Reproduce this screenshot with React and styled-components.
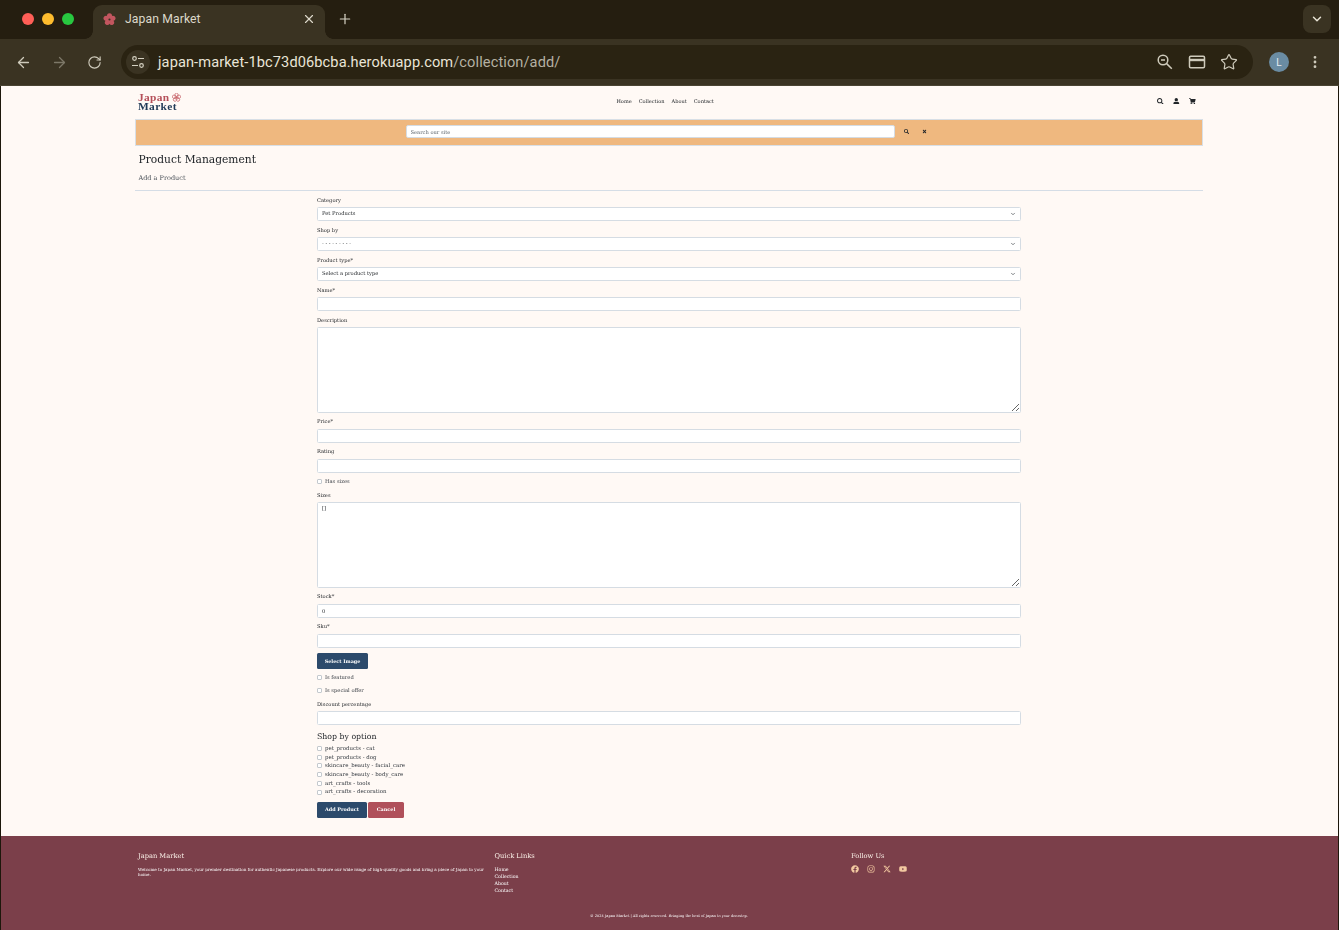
import React from "react";
import styled, { createGlobalStyle } from "styled-components";
import { ArrowLeft, ArrowRight, RotateCw, Plus, X, ChevronDown, Star, EllipsisVertical } from "lucide-react";
import { FaSearch, FaUser, FaShoppingCart, FaTimes, FaFacebook, FaInstagram, FaYoutube } from "react-icons/fa";
import { FaXTwitter } from "react-icons/fa6";

const serif = `"DejaVu Serif", "Liberation Serif", serif`;

const Global = createGlobalStyle`
  html, body { margin: 0; padding: 0; background: #1d170b; }
  * { box-sizing: border-box; }
  body { font-family: ${serif}; }
`;

const Window = styled.div`
  width: 1339px;
  height: 930px;
  overflow: hidden;
  display: flex;
  flex-direction: column;
`;
const TabStrip = styled.div`
  height: 39px;
  flex: none;
  background: #251e10;
  display: flex;
  align-items: flex-end;
  padding-left: 22px;
  padding-right: 8px;
`;
const Lights = styled.div`
  display: flex;
  gap: 8px;
  align-self: flex-start;
  margin-top: 13px;
  margin-right: 19px;
`;
const Light = styled.span`
  width: 12px;
  height: 12px;
  border-radius: 50%;
  background: ${p => p.$c};
`;
const Tab = styled.div`
  position: relative;
  width: 232px;
  height: 34px;
  background: #3a3322;
  border-radius: 9px 9px 0 0;
  display: flex;
  align-items: center;
  padding: 0 9px 6px 10px;
  color: #dcd8ca;
  font: 12.2px Roboto, sans-serif;
  letter-spacing: 0.1px;
  &::before, &::after {
    content: "";
    position: absolute;
    bottom: 0;
    width: 8px;
    height: 8px;
  }
  &::before { left: -8px; background: radial-gradient(circle at 0 0, #251e10 7.5px, #3a3322 8px); }
  &::after { right: -8px; background: radial-gradient(circle at 100% 0, #251e10 7.5px, #3a3322 8px); }
`;
const TabTitle = styled.span`
  margin-left: 9px;
  flex: 1;
`;
const NewTab = styled.div`
  color: #d8d4c6;
  display: flex;
  margin: 0 0 12px 12px;
`;
const TabMenu = styled.div`
  margin-left: auto;
  align-self: flex-start;
  margin-top: 5px;
  width: 28px;
  height: 28px;
  border-radius: 8px;
  background: #3a3322;
  color: #e8e4d6;
  display: flex;
  align-items: center;
  justify-content: center;
`;
const Toolbar = styled.div`
  height: 47px;
  flex: none;
  background: #3a3322;
  display: flex;
  align-items: center;
  padding: 0 14px;
  border-bottom: 1px solid #4a4433;
`;
const NavBtn = styled.div`
  width: 18px;
  margin-right: 18px;
  display: flex;
  justify-content: center;
  color: ${p => (p.$dim ? "#7d7868" : "#cfcbbc")};
  &:nth-child(2) { margin-right: 17px; }
  &:nth-child(3) { margin-right: 18px; }
`;
const Omnibox = styled.div`
  width: 1132px;
  height: 34px;
  border-radius: 17px;
  background: #2a2312;
  display: flex;
  align-items: center;
  padding: 0 15px 0 5px;
`;
const Tune = styled.div`
  width: 24px;
  height: 24px;
  border-radius: 50%;
  background: #3a3322;
  color: #d5d1c2;
  display: flex;
  align-items: center;
  justify-content: center;
  margin-right: 8px;
`;
const Url = styled.div`
  flex: 1;
  font: 14.6px Roboto, sans-serif;
  letter-spacing: 0.1px;
  color: #e9e5d7;
  & span { color: #b5b1a2; }
`;
const OmniIcons = styled.div`
  display: flex;
  gap: 14px;
  color: #cfcbbc;
`;
const Avatar = styled.div`
  width: 20px;
  height: 20px;
  margin-left: 16px;
  border-radius: 50%;
  background: #6a8ca3;
  color: #e8eef2;
  font: 10px Roboto, sans-serif;
  display: flex;
  align-items: center;
  justify-content: center;
`;
const Kebab = styled.div`
  margin-left: 18px;
  color: #cfcbbc;
  display: flex;
`;

const Page = styled.div`
  flex: 1;
  min-height: 0;
  margin: 0 1px;
  background: #fff9f5;
  display: flex;
  flex-direction: column;
  color: #212529;
`;
const Container = styled.div`
  width: 1068px;
  margin: 0 0 0 134px;
  flex: none;
  will-change: transform;
`;
const Header = styled.header`
  height: 33px;
  display: flex;
  align-items: center;
  justify-content: space-between;
  padding: 0 7px 1px 3px;
`;
const Logo = styled.div`
  width: 43px;
  font: 700 11.4px/9.5px "Liberation Serif", serif;
  letter-spacing: 0.35px;
  color: #1f3a57;
  & > div:first-child { color: #b5505a; display: flex; align-items: center; gap: 2px; }
`;
const Nav = styled.nav`
  display: flex;
  gap: 7px;
  margin-right: 8px;
  margin-bottom: 2px;
`;
const NavLink = styled.a`
  font-size: 5.05px;
  color: #212529;
`;
const HeaderIcons = styled.div`
  display: flex;
  gap: 9.5px;
  color: #212529;
  font-size: 6.6px;
  margin-bottom: 2px;
`;
const SearchBand = styled.div`
  height: 27px;
  background: #efb87f;
  border: 1px solid #d8dfe6;
  display: flex;
  align-items: center;
  justify-content: center;
  padding: 0 0 2px 1px;
`;
const SearchInput = styled.input`
  width: 489px;
  height: 13px;
  border: 1px solid #d5dce3;
  border-radius: 2px;
  background: #fff;
  padding: 0 4px;
  font: 5.15px ${serif};
  margin-right: 3px;
  &::placeholder { color: #5c646b; opacity: 1; }
`;
const SearchBtn = styled.div`
  width: 18px;
  display: flex;
  justify-content: center;
  color: #212529;
  font-size: 5px;
`;
const Heading = styled.div`
  padding: 8px 3.5px 0;
  border-bottom: 1px solid #d5dde6;
  height: 45px;
`;
const H1 = styled.h1`
  margin: 0;
  font: 400 10.7px/12px ${serif};
  color: #212529;
`;
const Sub = styled.div`
  margin-top: 8px;
  font-size: 6.5px;
  line-height: 8px;
  color: #495057;
`;
const Form = styled.form`
  width: 704px;
  margin: 5px auto 0;
`;
const Field = styled.div`
  margin-bottom: ${p => p.$mb ?? 5.5}px;
`;
const Label = styled.label`
  display: block;
  height: 8px;
  line-height: 8px;
  font-size: 5.15px;
  color: #212529;
  margin-bottom: ${p => p.$gap ?? 3}px;
`;
const SelectWrap = styled.div`
  position: relative;
  height: 13.5px;
  & > svg {
    position: absolute;
    right: 5px;
    top: 4px;
    color: #343a40;
  }
`;
const Select = styled.select`
  appearance: none;
  display: block;
  width: 100%;
  height: 100%;
  border: 1px solid #d5dce3;
  border-radius: 1.5px;
  background: #fff;
  padding: 0 4px 1px;
  font: 5.2px ${serif};
  letter-spacing: ${p => (p.$spaced ? "1.65px" : "0")};
  color: #212529;
`;
const Input = styled.input`
  display: block;
  width: 100%;
  height: 14px;
  border: 1px solid #d5dce3;
  border-radius: 1.5px;
  background: #fff;
  padding: 0 4px 1px;
  font: 5.2px ${serif};
  color: #212529;
`;
const TextArea = styled.textarea`
  display: block;
  width: 100%;
  height: 86px;
  border: 1px solid #d5dce3;
  border-radius: 1.5px;
  background: #fff;
  padding: 2px 4px;
  font: 5.2px ${serif};
  color: #212529;
`;
const Check = styled.div`
  display: flex;
  align-items: center;
  height: ${p => p.$h}px;
  margin-bottom: ${p => p.$mb ?? 0}px;
  font-size: ${p => p.$size ?? 5.2}px;
  color: #343a40;
  & input {
    appearance: none;
    width: 5px;
    height: 5px;
    margin: 1.5px 3px 0 0;
    border: 0.5px solid #c4c9ce;
    border-radius: 1px;
    background: #fff;
    flex: none;
  }
`;
const Btn = styled.button`
  display: block;
  height: 16px;
  border: none;
  border-radius: 1.5px;
  padding: 0 0 1px;
  width: ${p => p.$w}px;
  background: ${p => p.$bg};
  color: #fff;
  font: 700 4.9px ${serif};
`;
const OptionTitle = styled.h2`
  margin: 0 0 1.5px;
  font: 400 7.8px/11px ${serif};
  color: #212529;
`;
const Actions = styled.div`
  display: flex;
  gap: 1px;
  margin-top: 6px;
`;
const Footer = styled.footer`
  margin-top: auto;
  height: 94px;
  flex: none;
  background: #7b3f4a;
  color: #fff;
`;
const FooterInner = styled.div`
  width: 1068px;
  margin: 0 0 0 134px;
  padding: 15.5px 3px 0;
  will-change: transform;
`;
const FooterCols = styled.div`
  display: grid;
  grid-template-columns: repeat(3, 356.5px);
  height: 53.5px;
`;
const FooterCol = styled.div`
  padding-right: 10px;
`;
const FooterTitle = styled.h5`
  margin: 0 0 5.5px;
  font: 400 6.7px/9px ${serif};
  color: #fbf1e8;
`;
const FooterText = styled.p`
  margin: 0;
  padding-top: 1px;
  font-size: 4.12px;
  line-height: 5.2px;
  color: #fff;
`;
const FooterLink = styled.a`
  display: block;
  font-size: 4.7px;
  line-height: 7px;
  color: #fff;
`;
const Socials = styled.div`
  display: flex;
  gap: 8px;
  margin-top: -1px;
  color: #f3c9a1;
  font-size: 8px;
`;
const Copy = styled.div`
  margin-top: 8px;
  text-align: center;
  font-size: 3.56px;
  line-height: 6px;
  color: #fff;
`;

const Flower = ({ size, color }) => (
  <svg width={size} height={size} viewBox="0 0 24 24" fill={color}>
    {[0, 72, 144, 216, 288].map(a => (
      <ellipse key={a} cx="12" cy="6.5" rx="4.8" ry="6" transform={`rotate(${a} 12 12)`} />
    ))}
    <circle cx="12" cy="12" r="2" fill="#3a3322" />
  </svg>
);
const TuneIcon = () => (
  <svg width="14" height="14" viewBox="0 0 14 14" fill="none" stroke="currentColor" strokeWidth="1.2">
    <circle cx="3.5" cy="3.5" r="1.8" />
    <path d="M7 3.5h6M1 10.5h6" />
    <circle cx="10.5" cy="10.5" r="1.8" />
  </svg>
);
const ZoomIcon = () => (
  <svg width="18" height="18" viewBox="0 0 18 18" fill="none" stroke="currentColor" strokeWidth="1.5">
    <circle cx="7" cy="7" r="4.8" />
    <path d="M5 7h4M10.6 10.6l5.2 5.2" />
  </svg>
);
const CardIcon = () => (
  <svg width="18" height="18" viewBox="0 0 18 18" fill="none" stroke="currentColor" strokeWidth="1.5">
    <rect x="1.5" y="3.2" width="15" height="11.6" rx="1.2" />
    <path d="M1.5 7h15" strokeWidth="2.4" />
  </svg>
);
const LogoFlower = () => (
  <svg width="9" height="9" viewBox="0 0 24 24" fill="none" stroke="#c96a70" strokeWidth="2">
    {[0, 72, 144, 216, 288].map(a => (
      <ellipse key={a} cx="12" cy="6" rx="4.5" ry="5.5" transform={`rotate(${a} 12 12)`} />
    ))}
    <circle cx="12" cy="12" r="1.5" />
  </svg>
);

const SelectField = ({ label, value, spaced }) => (
  <Field>
    <Label>{label}</Label>
    <SelectWrap>
      <Select defaultValue={value} $spaced={spaced}><option>{value}</option></Select>
      <ChevronDown size={6} strokeWidth={2.5} />
    </SelectWrap>
  </Field>
);
const InputField = ({ label, value, gap, mb }) => (
  <Field $mb={mb}>
    <Label $gap={gap}>{label}</Label>
    <Input defaultValue={value} />
  </Field>
);
const AreaField = ({ label, value }) => (
  <Field $mb={4}>
    <Label>{label}</Label>
    <TextArea defaultValue={value} />
  </Field>
);

const options = [
  "pet_products - cat",
  "pet_products - dog",
  "skincare_beauty - facial_care",
  "skincare_beauty - body_care",
  "art_crafts - tools",
  "art_crafts - decoration",
];

export default function App() {
  return (
    <Window>
      <Global />
      <TabStrip>
        <Lights>
          <Light $c="#ff5f57" />
          <Light $c="#febc2e" />
          <Light $c="#28c840" />
        </Lights>
        <Tab>
          <Flower size={13} color="#c2565f" />
          <TabTitle>Japan Market</TabTitle>
          <X size={14} strokeWidth={2} />
        </Tab>
        <NewTab><Plus size={16} strokeWidth={1.8} /></NewTab>
        <TabMenu><ChevronDown size={14} strokeWidth={2.5} /></TabMenu>
      </TabStrip>
      <Toolbar>
        <NavBtn><ArrowLeft size={17} strokeWidth={1.8} /></NavBtn>
        <NavBtn $dim><ArrowRight size={17} strokeWidth={1.8} /></NavBtn>
        <NavBtn><RotateCw size={15} strokeWidth={1.8} /></NavBtn>
        <Omnibox>
          <Tune><TuneIcon /></Tune>
          <Url>japan-market-1bc73d06bcba.herokuapp.com<span>/collection/add/</span></Url>
          <OmniIcons>
            <ZoomIcon />
            <CardIcon />
            <Star size={18} strokeWidth={1.6} />
          </OmniIcons>
        </Omnibox>
        <Avatar>L</Avatar>
        <Kebab><EllipsisVertical size={16} strokeWidth={2.2} /></Kebab>
      </Toolbar>
      <Page>
        <Container>
          <Header>
            <Logo>
              <div>Japan<LogoFlower /></div>
              <div>Market</div>
            </Logo>
            <Nav>
              <NavLink>Home</NavLink>
              <NavLink>Collection</NavLink>
              <NavLink>About</NavLink>
              <NavLink>Contact</NavLink>
            </Nav>
            <HeaderIcons>
              <FaSearch />
              <FaUser />
              <FaShoppingCart />
            </HeaderIcons>
          </Header>
          <SearchBand>
            <SearchInput placeholder="Search our site" />
            <SearchBtn><FaSearch /></SearchBtn>
            <SearchBtn><FaTimes /></SearchBtn>
          </SearchBand>
          <Heading>
            <H1>Product Management</H1>
            <Sub>Add a Product</Sub>
          </Heading>
          <Form>
            <SelectField label="Category" value="Pet Products" />
            <SelectField label="Shop by" value="---------" spaced />
            <SelectField label="Product type*" value="Select a product type" />
            <InputField label="Name*" mb={5} />
            <AreaField label="Description" />
            <InputField label="Price*" gap={4} mb={4} />
            <InputField label="Rating" gap={4} mb={0} />
            <Check $h={16} $mb={2}><input type="checkbox" />Has sizes</Check>
            <AreaField label="Sizes" value="[]" />
            <InputField label="Stock*" value="0" gap={4} mb={4} />
            <InputField label="Sku*" gap={4} mb={5} />
            <Btn type="button" $w={51} $bg="#2c4a6b">Select Image</Btn>
            <Check $h={16}><input type="checkbox" />Is featured</Check>
            <Check $h={10} $mb={5}><input type="checkbox" />Is special offer</Check>
            <InputField label="Discount percentage" mb={6} />
            <OptionTitle>Shop by option</OptionTitle>
            {options.map(o => (
              <Check key={o} $h={8.7} $size={5.45}><input type="checkbox" />{o}</Check>
            ))}
            <Actions>
              <Btn type="button" $w={50} $bg="#2c4a6b">Add Product</Btn>
              <Btn type="button" $w={36} $bg="#b0505a">Cancel</Btn>
            </Actions>
          </Form>
        </Container>
        <Footer>
          <FooterInner>
            <FooterCols>
              <FooterCol>
                <FooterTitle>Japan Market</FooterTitle>
                <FooterText>Welcome to Japan Market, your premier destination for authentic Japanese products. Explore our wide range of high-quality goods and bring a piece of Japan to your home.</FooterText>
              </FooterCol>
              <FooterCol>
                <FooterTitle>Quick Links</FooterTitle>
                <FooterLink>Home</FooterLink>
                <FooterLink>Collection</FooterLink>
                <FooterLink>About</FooterLink>
                <FooterLink>Contact</FooterLink>
              </FooterCol>
              <FooterCol>
                <FooterTitle>Follow Us</FooterTitle>
                <Socials>
                  <FaFacebook />
                  <FaInstagram />
                  <FaXTwitter />
                  <FaYoutube />
                </Socials>
              </FooterCol>
            </FooterCols>
            <Copy>© 2024 Japan Market | All rights reserved. Bringing the best of Japan to your doorstep.</Copy>
          </FooterInner>
        </Footer>
      </Page>
    </Window>
  );
}
